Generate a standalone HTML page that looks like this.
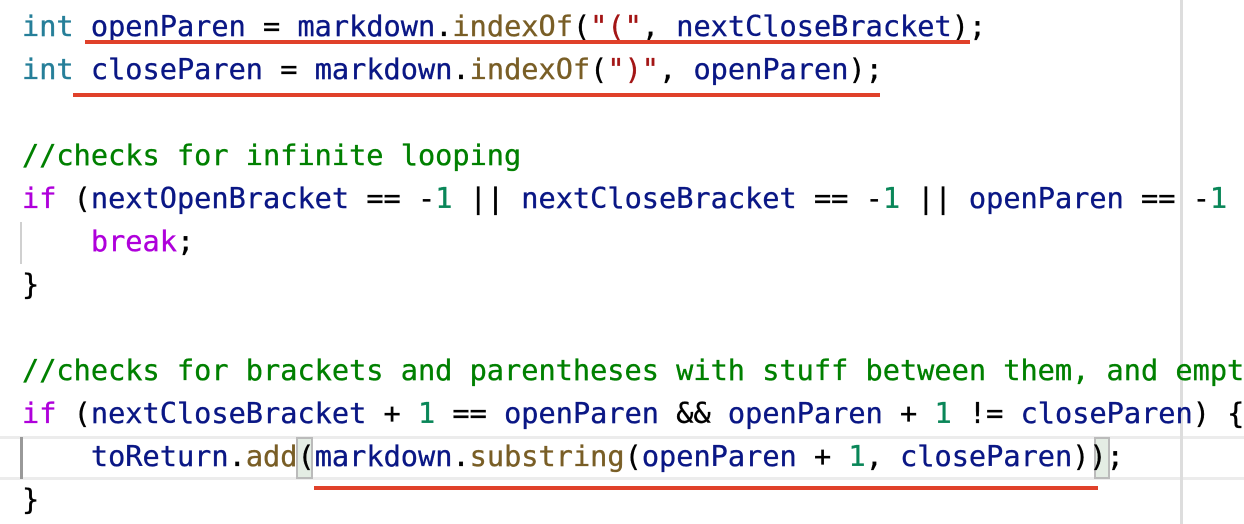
<!DOCTYPE html>
<html><head><style>
html,body{margin:0;padding:0;background:#fff;width:1244px;height:524px;overflow:hidden;position:relative}
.code{position:absolute;left:22px;top:5px;font-family:"DejaVu Sans Mono","Liberation Mono",monospace;font-size:28.6px;line-height:43px;white-space:pre;color:#000;-webkit-text-stroke:0.35px currentColor}
.t{color:#267f99}.v{color:#0a1785}.m{color:#795e26}.s{color:#a31515}.c{color:#008000}.n{color:#098658}.k{color:#af00db}
.abs{position:absolute}
.red{position:absolute;background:#e0412a;height:4px}
</style></head><body>
<div class="abs" style="left:0;top:436px;width:1244px;height:44px;box-sizing:border-box;border-top:3px solid #ececec;border-bottom:3px solid #ececec"></div>
<div class="abs" style="left:296px;top:437px;width:17px;height:42px;background:#e4ede4;box-sizing:border-box;border:2px solid #bbb"></div>
<div class="abs" style="left:1094px;top:437px;width:16px;height:42px;background:#e4ede4;box-sizing:border-box;border:2px solid #bbb"></div>
<div class="abs" style="left:20px;top:222px;width:2px;height:42px;background:#d0d0d0"></div>
<div class="abs" style="left:20px;top:437px;width:3px;height:42px;background:#999"></div>
<div class="abs" style="left:1180px;top:0;width:3px;height:524px;background:#ddd"></div>
<div class="code"><span class="t">int</span> <span class="v">openParen</span> = <span class="v">markdown</span>.<span class="m">indexOf</span>(<span class="s">"("</span>, <span class="v">nextCloseBracket</span>);
<span class="t">int</span> <span class="v">closeParen</span> = <span class="v">markdown</span>.<span class="m">indexOf</span>(<span class="s">")"</span>, <span class="v">openParen</span>);

<span class="c">//checks for infinite looping</span>
<span class="k">if</span> (<span class="v">nextOpenBracket</span> == -<span class="n">1</span> || <span class="v">nextCloseBracket</span> == -<span class="n">1</span> || <span class="v">openParen</span> == -<span class="n">1</span>
    <span class="k">break</span>;
}

<span class="c">//checks for brackets and parentheses with stuff between them, and empty</span>
<span class="k">if</span> (<span class="v">nextCloseBracket</span> + <span class="n">1</span> == <span class="v">openParen</span> &amp;&amp; <span class="v">openParen</span> + <span class="n">1</span> != <span class="v">closeParen</span>) {
    <span class="v">toReturn</span>.<span class="m">add</span>(<span class="v">markdown</span>.<span class="m">substring</span>(<span class="v">openParen</span> + <span class="n">1</span>, <span class="v">closeParen</span>));
}</div>
<div class="red" style="left:85px;top:40px;width:885px"></div>
<div class="red" style="left:73px;top:93px;width:807px"></div>
<div class="red" style="left:314px;top:486px;width:784px"></div>
</body></html>
